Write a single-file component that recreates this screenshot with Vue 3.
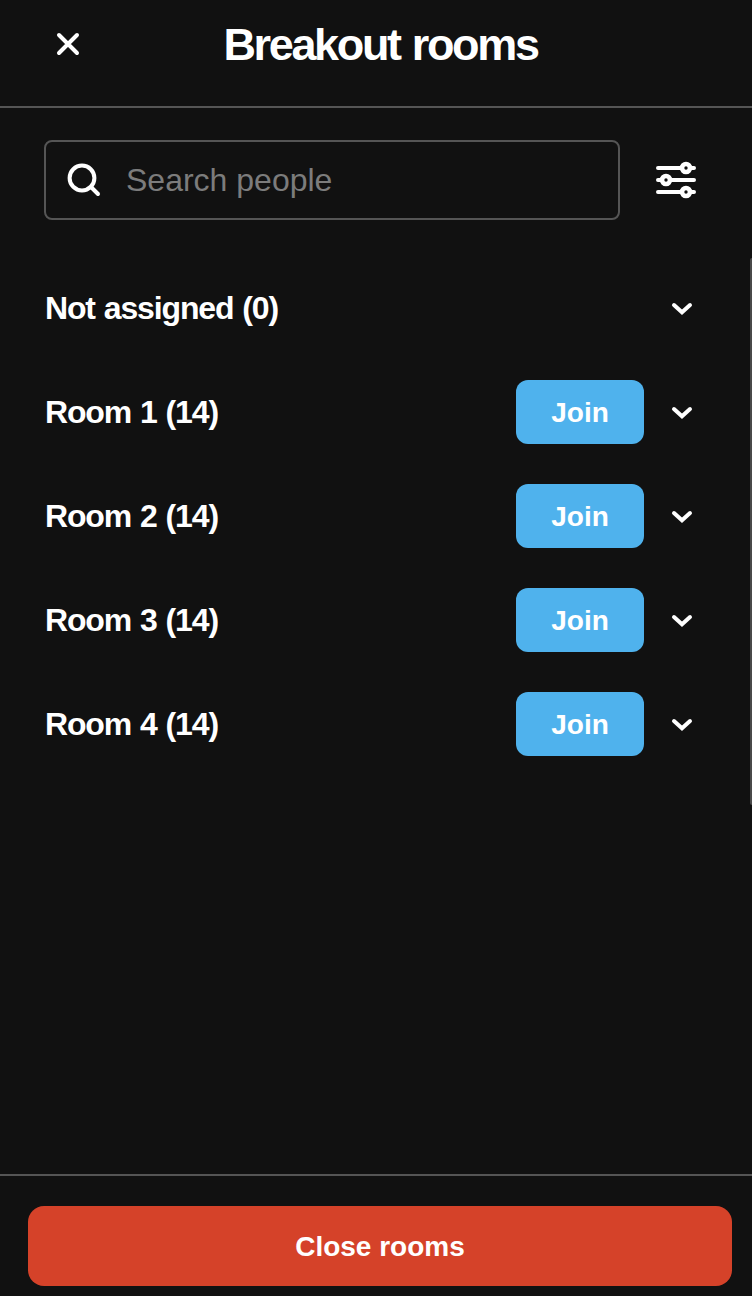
<template>
  <div class="panel">
    <header class="panel-header">
      <button class="icon-btn close-btn" title="Close">
        <svg width="24" height="24" viewBox="0 0 24 24">
          <path d="M3 3L21 21M21 3L3 21" />
        </svg>
      </button>
      <h1 class="title">Breakout rooms</h1>
    </header>

    <div class="search-row">
      <label class="search-box">
        <svg class="search-icon" width="36" height="36" viewBox="0 0 36 36">
          <circle cx="16" cy="16" r="12.4" />
          <path d="M25 25L32 32" />
        </svg>
        <input v-model="search" type="text" placeholder="Search people" />
      </label>
      <button class="icon-btn filter-btn" title="Filter">
        <svg width="40" height="40" viewBox="0 0 40 40">
          <path d="M2 8H26M34 8H38M2 20H6M14 20H38M2 32H26M34 32H38" />
          <circle cx="30" cy="8" r="4" />
          <circle cx="10" cy="20" r="4" />
          <circle cx="30" cy="32" r="4" />
        </svg>
      </button>
    </div>

    <div class="content">
      <ul class="room-list">
        <li v-for="room in rooms" :key="room.name" class="room">
          <span class="room-name">{{ room.name }} ({{ room.count }})</span>
          <button v-if="room.joinable" class="join-btn">Join</button>
          <button class="icon-btn expand-btn" @click="room.open = !room.open">
            <svg :class="{ open: room.open }" width="24" height="16" viewBox="0 0 24 16">
              <path d="M4 5L12 12.2L20 5" />
            </svg>
          </button>
        </li>
      </ul>
      <div class="scroll-thumb"></div>
    </div>

    <footer class="panel-footer">
      <button class="close-rooms-btn">Close rooms</button>
    </footer>
  </div>
</template>

<script setup>
import { ref } from 'vue';

const search = ref('');

const rooms = ref([
  { name: 'Not assigned', count: 0, joinable: false, open: false },
  { name: 'Room 1', count: 14, joinable: true, open: false },
  { name: 'Room 2', count: 14, joinable: true, open: false },
  { name: 'Room 3', count: 14, joinable: true, open: false },
  { name: 'Room 4', count: 14, joinable: true, open: false }
]);
</script>

<style>
body {
  background: #111111;
}
</style>

<style scoped>
.panel {
  display: flex;
  flex-direction: column;
  height: 100vh;
  box-sizing: border-box;
  background: #111111;
  color: #ffffff;
  font-family: "Liberation Sans", Arial, sans-serif;
}

button {
  border: none;
  padding: 0;
  color: #ffffff;
  font-family: inherit;
  cursor: pointer;
}

svg {
  display: block;
  fill: none;
  stroke: #ffffff;
  stroke-width: 4;
  stroke-linecap: round;
  stroke-linejoin: round;
}

.icon-btn {
  background: none;
}

.panel-header {
  display: grid;
  grid-template-columns: 80px 1fr 80px;
  align-items: center;
  height: 108px;
  padding: 0 0 18px;
  box-sizing: border-box;
  border-bottom: 2px solid #555555;
}

.close-btn {
  justify-self: end;
}

.title {
  margin: 0;
  padding: 2px 0 0 9px;
  font-size: 45px;
  line-height: 52px;
  font-weight: 700;
  letter-spacing: -2.35px;
  word-spacing: 2px;
  text-align: center;
}

.search-row {
  display: flex;
  align-items: center;
  gap: 36px;
  padding: 32px 56px 38px 44px;
}

.search-box {
  display: flex;
  flex: 1;
  align-items: center;
  gap: 24px;
  height: 80px;
  padding: 0 20px;
  box-sizing: border-box;
  border: 2px solid #555555;
  border-radius: 8px;
}

.search-box input {
  flex: 1;
  min-width: 0;
  padding: 0;
  border: none;
  outline: none;
  background: none;
  color: #ffffff;
  font-family: inherit;
  font-size: 32px;
}

.search-box input::placeholder {
  color: #7c7c7c;
  opacity: 1;
}

.filter-btn circle {
  stroke-width: 4.6;
}

.content {
  display: flex;
  flex: 1;
}

.room-list {
  flex: 1;
  margin: -2px 0 0;
  padding: 0 56px 0 44px;
  list-style: none;
}

.room {
  display: flex;
  align-items: center;
  height: 104px;
}

.room-name {
  flex: 1;
  padding-left: 1px;
  font-size: 32px;
  font-weight: 700;
  letter-spacing: -1.15px;
  word-spacing: 1.2px;
}

.join-btn {
  width: 128px;
  height: 64px;
  margin-right: 26px;
  padding-top: 2px;
  border-radius: 12px;
  background: #4fb2ed;
  font-size: 28px;
  font-weight: 700;
}

.expand-btn svg {
  stroke-linejoin: miter;
}

.expand-btn svg.open {
  transform: rotate(180deg);
}

.scroll-thumb {
  width: 2px;
  height: 547px;
  border-radius: 2px 0 0 2px;
  background: #4a4a4a;
}

.panel-footer {
  padding: 30px 20px 10px 28px;
  border-top: 2px solid #555555;
}

.close-rooms-btn {
  width: 100%;
  height: 80px;
  display: block;
  border-radius: 16px;
  padding-top: 2px;
  background: #d54229;
  font-size: 28px;
  font-weight: 700;
}
</style>
